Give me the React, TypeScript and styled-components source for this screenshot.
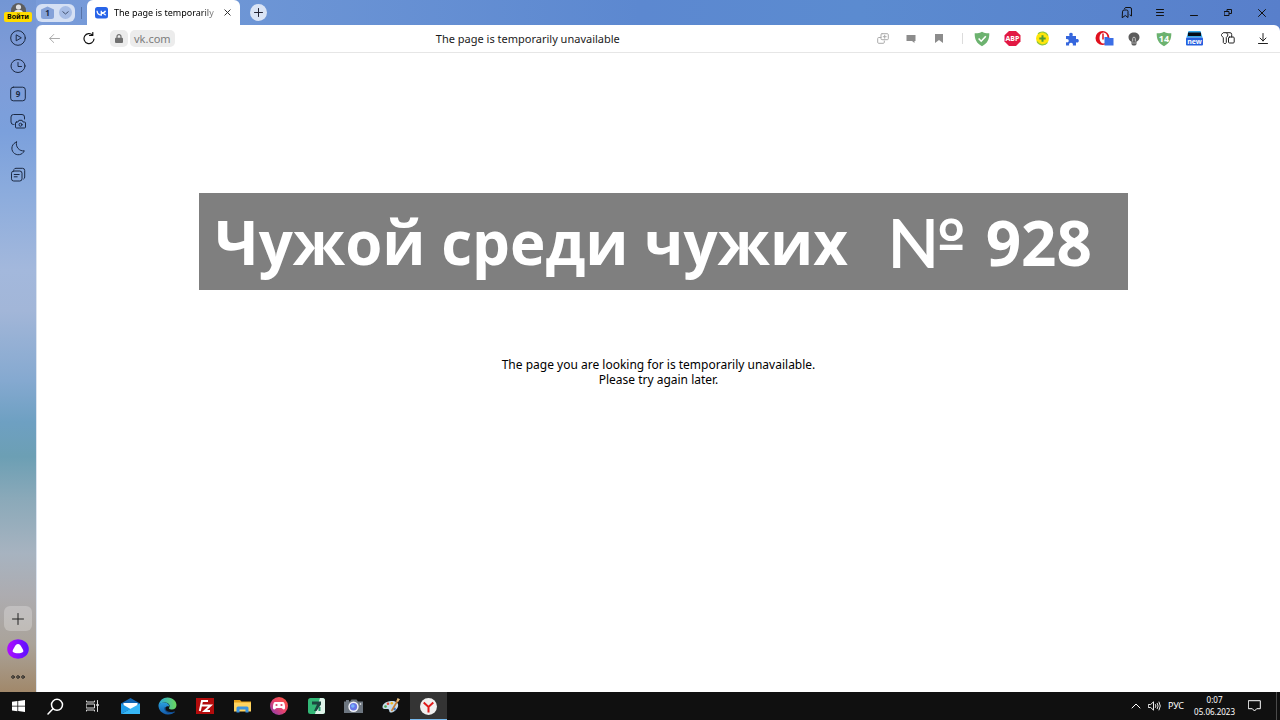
import React from "react";
import styled, { createGlobalStyle } from "styled-components";

const Global = createGlobalStyle`
  * { box-sizing: border-box; }
  body { margin: 0; background: #fff; font-family: "Noto Sans", "Open Sans", sans-serif; color: #000; }
  button { border: 0; padding: 0; background: none; font: inherit; color: inherit; cursor: pointer; }
  svg { display: block; flex: none; }
`;

const Screen = styled.div`
  display: flex;
  flex-direction: column;
  min-height: 100vh;
`;

const Browser = styled.div`
  flex: 1;
  display: flex;
  background: linear-gradient(90deg, #7c9dda 0, #6f97d6 200px, #5c88d0 640px, #5b8bd0 860px, #587fcb 1280px);
`;

const Sidebar = styled.nav`
  width: 36px;
  display: flex;
  flex-direction: column;
  background: linear-gradient(
    180deg,
    #7396d4 0%,
    #7f9cd8 9%,
    #7ba0dc 19%,
    #8cacdd 28%,
    #a3b8dc 39%,
    #a2b6d8 45%,
    #85a9d0 55%,
    #6ea0c2 61%,
    #6c9fb4 66%,
    #8aa9b9 72%,
    #a7b3c0 80%,
    #adacb0 86%,
    #aaa39a 93%,
    #a1886a 100%
  );
`;

const SideGroup = styled.div<{ $end?: boolean }>`
  display: flex;
  flex-direction: column;
  align-items: center;
  margin-top: ${(p) => (p.$end ? "auto" : "0")};
`;

const SideButton = styled.button<{ $height?: number }>`
  width: 36px;
  height: ${(p) => p.$height ?? 28}px;
  display: flex;
  align-items: center;
  justify-content: center;
`;

const Login = styled.button`
  display: flex;
  flex-direction: column;
  align-items: center;
  height: 24px;
  padding-top: 3px;
`;

const LoginLabel = styled.span`
  width: 28px;
  height: 10px;
  border-radius: 2px;
  background: #ffdc00;
  font-size: 7px;
  line-height: 10px;
  font-weight: 700;
  text-align: center;
`;

const AddPanel = styled.button`
  width: 28px;
  height: 25px;
  margin-bottom: 4px;
  border-radius: 6px;
  background: rgba(255, 255, 255, 0.25);
  display: flex;
  align-items: center;
  justify-content: center;
`;

const Main = styled.div`
  flex: 1;
  min-width: 0;
  display: flex;
  flex-direction: column;
`;

const TabStrip = styled.header`
  height: 25px;
  display: flex;
  align-items: center;
`;

const Workspace = styled.div`
  height: 18px;
  padding: 0 3px 0 5px;
  gap: 5px;
  border-radius: 6px;
  background: #d5e0f4;
  display: flex;
  align-items: center;
`;

const StripDivider = styled.span`
  width: 1px;
  height: 12px;
  margin: 0 5px 0 6px;
  background: #5673a8;
`;

const Tab = styled.div`
  align-self: stretch;
  width: 153px;
  padding: 0 9px 0 8px;
  border-radius: 6px 6px 0 0;
  background: #fff;
  display: flex;
  align-items: center;
  gap: 6px;
`;

const TabTitle = styled.span`
  flex: 1;
  white-space: nowrap;
  font-size: 9px;
  line-height: 14px;
  mask-image: linear-gradient(90deg, #000 85%, rgba(0, 0, 0, 0.2));
`;

const NewTab = styled.button`
  width: 17px;
  height: 17px;
  margin-left: 10px;
  border-radius: 50%;
  background: #dae4f5;
  display: flex;
  align-items: center;
  justify-content: center;
`;

const WindowControls = styled.div`
  display: flex;
  margin-left: auto;
  padding-right: 1px;
`;

const WindowButton = styled.button`
  width: 34px;
  height: 25px;
  display: flex;
  align-items: center;
  justify-content: center;
`;

const Viewport = styled.div`
  flex: 1;
  display: flex;
  flex-direction: column;
  border-left: 1px solid #dbe3ee;
  border-radius: 6px 6px 0 0;
  background: #fff;
`;

const Toolbar = styled.div`
  height: 28px;
  display: flex;
  align-items: center;
  border-bottom: 1px solid #e6e6e6;
`;

const ToolButton = styled.button<{ $width: number }>`
  width: ${(p) => p.$width}px;
  height: 27px;
  display: flex;
  align-items: center;
  justify-content: center;
`;

const Address = styled.div`
  display: flex;
  gap: 2px;
  margin-left: 4px;
`;

const Chip = styled.button<{ $pad: number }>`
  height: 17px;
  padding: 0 ${(p) => p.$pad}px;
  border-radius: 5px;
  background: #ececec;
  color: #7c7c7c;
  font-size: 11px;
  line-height: 17px;
  display: flex;
  align-items: center;
`;

const PageName = styled.div`
  flex: 1;
  padding-left: 12px;
  text-align: center;
  font-size: 11px;
  line-height: 16px;
  color: #1a1a1a;
`;

const ToolGroup = styled.div`
  display: flex;
  margin-right: 2px;
`;

const ToolDivider = styled.span`
  align-self: center;
  width: 1px;
  height: 11px;
  margin: 0 4px 0 9px;
  background: #dcdcdc;
`;

const Page = styled.main`
  flex: 1;
  display: flex;
  flex-direction: column;
  align-items: center;
  padding-top: 140px;
`;

const Banner = styled.h1`
  width: 75%;
  max-width: 929px;
  min-height: 97px;
  margin: 0 0 67px 10px;
  padding: 0 16px;
  background: #7f7f7f;
  color: #fff;
  display: flex;
  align-items: center;
  font-family: "Open Sans", sans-serif;
  font-size: 60px;
  line-height: 90px;
  white-space: nowrap;
`;

const NumberSign = styled.span`
  margin-left: auto;
  margin-right: 20px;
  font-family: Lato, sans-serif;
  font-size: 68px;
  font-weight: 600;
`;

const Score = styled.span`
  margin-right: 20px;
  font-size: 62px;
`;

const Message = styled.p`
  margin: 0;
  text-align: center;
  font-size: 12px;
  line-height: 15px;
`;

const Taskbar = styled.footer`
  height: 28px;
  display: flex;
  align-items: center;
  justify-content: space-between;
  background: #101010;
  color: #fff;
`;

const Apps = styled.div`
  width: 447px;
  height: 28px;
  display: grid;
  grid-template-columns: repeat(12, 1fr);
`;

const AppButton = styled.button<{ $active?: boolean }>`
  display: flex;
  align-items: center;
  justify-content: center;
  background: ${(p) => (p.$active ? "#343434" : "none")};
  box-shadow: ${(p) => (p.$active ? "inset 0 -1px #76b9ed" : "none")};
`;

const Tray = styled.div`
  display: flex;
  align-items: center;
  gap: 7px;
`;

const Lang = styled.button`
  font-size: 9px;
  line-height: 12px;
`;

const Clock = styled.time`
  text-align: center;
  font-size: 8px;
  line-height: 12px;
  margin: 0 6px 0 3px;
`;

const ShowDesktop = styled.button`
  width: 4px;
  height: 28px;
  margin-left: 8px;
  border-left: 1px solid #4a4a4a;
`;

type IconProps = {
  w?: number;
  h?: number;
  box?: string;
  stroke?: string;
  sw?: number;
  children: React.ReactNode;
};

const Line = ({ w = 16, h = w, box, stroke = "#1c2a44", sw = 1, children }: IconProps) => (
  <svg
    width={w}
    height={h}
    viewBox={box ?? `0 0 ${w} ${h}`}
    fill="none"
    stroke={stroke}
    strokeWidth={sw}
    strokeLinecap="round"
    strokeLinejoin="round"
    aria-hidden="true"
  >
    {children}
  </svg>
);

const Art = ({ w = 16, h = w, box, children }: IconProps) => (
  <svg width={w} height={h} viewBox={box ?? `0 0 ${w} ${h}`} aria-hidden="true">
    {children}
  </svg>
);

const glyphText = { fontFamily: "Open Sans", fontWeight: 700, textAnchor: "middle" as const, stroke: "none" };

const sideItems = [
  { label: "Видео", icon: <Line><circle cx="8" cy="8" r="7.3" /><path d="M6.2 5.2v5.6L11 8z" /></Line> },
  { label: "История", icon: <Line><ellipse cx="8" cy="8" rx="7" ry="6.5" /><path d="M8 4.5V8.5H11.5" /></Line> },
  {
    label: "Вкладки",
    icon: (
      <Line>
        <rect x="0.7" y="1.2" width="14.6" height="13.6" rx="2.6" />
        <text x="8" y="11.2" fontSize="8" fill="#1c2a44" {...glyphText}>9</text>
      </Line>
    ),
  },
  {
    label: "Скриншот",
    icon: (
      <Line>
        <path d="M4 11.500H3.500a2.500 2.500 0 0 1-2.500-2.500V4a2.500 2.500 0 0 1 2.500-2.500h8.500a2.500 2.500 0 0 1 2.500 2.500v2" />
        <path d="M6.500 9h1.400l1-1.700h3.200l1 1.700h1.400a1 1 0 0 1 1 1v4a1 1 0 0 1-1 1h-8a1 1 0 0 1-1-1v-4a1 1 0 0 1 1-1z" />
        <circle cx="10.500" cy="11.700" r="1.500" />
      </Line>
    ),
  },
  { label: "Тёмная тема", icon: <Line><path d="M6.500 2A6.500 6.500 0 1 0 14.300 10.800A7 7 0 0 1 6.500 2z" /></Line> },
  {
    label: "Лента",
    icon: (
      <Line>
        <rect x="1.500" y="4" width="10.500" height="10" rx="2.200" />
        <path d="M4 2.300a2 2 0 0 1 2-1h6.500a2.200 2.200 0 0 1 2.200 2.200v6.500a2 2 0 0 1-1 2M4.200 7.500h5M4.200 9.800h3" />
      </Line>
    ),
  },
];

const shield = "M8 .7C10 2 12.500 2.400 15.300 2.300C15.500 8 13.500 12.500 8 15.300C2.500 12.500.5 8 .7 2.300C3.500 2.400 6 2 8 .7z";

const extensionsA = [
  {
    label: "Protect",
    icon: <Art><path d={shield} fill="#6cb26f" /><path d="M4.600 7.500L7.200 10.200L11.800 5.200" fill="none" stroke="#fff" strokeWidth="1.600" /></Art>,
  },
  {
    label: "Adblock Plus",
    icon: (
      <Art w={17} h={15}>
        <path d="M5 0h7l4.500 4.300v6.200L12 15H5L.5 10.500V4.300z" fill="#e21843" />
        <text x="8.500" y="10" fontSize="7" fill="#fff" {...glyphText}>ABP</text>
      </Art>
    ),
  },
  {
    label: "Savings",
    icon: (
      <Art w={15}>
        <circle cx="7.500" cy="7.500" r="6.500" fill="#ffe60a" />
        <path d="M2 10.500A6.300 6.300 0 0 0 12.500 11.500M13 4.500A6.300 6.300 0 0 0 3 2.800" fill="none" stroke="#8fc63f" strokeWidth="1.200" />
        <path d="M7.500 4.300v6.400M4.300 7.500h6.400" stroke="#4f9a35" strokeWidth="2" />
      </Art>
    ),
  },
  {
    label: "Extensions",
    icon: <Art w={14}><path d="M1 4h3.500C3.700 2 4.500.8 6 .8S8.300 2 7.500 4H11v3.200c1.600-.7 2.800 0 2.800 1.500S12.600 11 11 10.300V13.500H7.800C8.300 11.800 7.500 10.800 6 10.800S3.700 11.800 4.200 13.500H1v-3.200c1.800.5 2.700-.3 2.700-1.500S2.800 6.700 1 7.200z" fill="#3566dd" /></Art>,
  },
];

const extensionsB = [
  {
    label: "VPN",
    icon: (
      <Art w={19} h={15}>
        <circle cx="7.500" cy="7" r="7" fill="#e0101d" />
        <ellipse cx="8.500" cy="7" rx="4" ry="5.600" fill="#fff" />
        <path d="M8 2.500v6" stroke="#e0101d" strokeWidth="1.500" />
        <path d="M9.500 6h3.500l1 1h4.500v7.500h-9z" fill="#3b6ee6" />
      </Art>
    ),
  },
  {
    label: "Lamp",
    icon: (
      <Art w={12} h={14}>
        <path d="M6 .5c3.200 0 5.500 1.900 5.500 4.700c0 2.200-1.300 3.600-3 4.500v2.500L7.300 13.500H4.700L3.500 12.200V9.700C1.800 8.800.5 7.400.5 5.200C.5 2.400 2.800.5 6 .5z" fill="#5c5c5c" />
        <path d="M4.700 9.500V6.500a1.300 1.300 0 0 1 2.600 0V9.500" fill="none" stroke="#c4c4c4" />
        <path d="M3.500 11h5" stroke="#aaa" />
      </Art>
    ),
  },
  {
    label: "Tracker blocker, 14",
    icon: (
      <Art>
        <path d={shield} fill="#6cb26f" />
        <text x="8" y="11" fontSize="9" fill="#fff" {...glyphText}>14</text>
      </Art>
    ),
  },
  {
    label: "News",
    icon: (
      <Art w={17} h={15}>
        <path d="M2.500 0h12l2 6.500H.5z" fill="#36a9ea" />
        <path d="M2 1.500h13v3.500h-13z" fill="#050c18" />
        <rect x="0" y="6.500" width="17" height="8" rx="1" fill="#2560df" />
        <text x="8.500" y="13" fontSize="7" fill="#fff" {...glyphText}>new</text>
      </Art>
    ),
  },
];

const apps = [
  {
    label: "Пуск",
    icon: <Art w={13} h={12}><path d="M0 1.700L5.400 1v4.700H0zM6.200.9L13 0v5.700H6.200zM0 6.500h5.400v4.700L0 10.400zM6.200 6.500H13V12l-6.800-.9z" fill="#fff" /></Art>,
  },
  { label: "Поиск", icon: <Line w={17} stroke="#fff" sw={1.5}><circle cx="10" cy="6.800" r="5.500" /><path d="M6 10.800L1 16" /></Line> },
  {
    label: "Представление задач",
    icon: <Line w={14} h={12} stroke="#dcdcdc"><path d="M.5 1v1h8V1M.5 11v-1h8v1M.5 4h8v4h-8zM11.500.5v11M11 4.500h1.500v1h-1.500z" /></Line>,
  },
  {
    label: "Почта",
    icon: (
      <Art w={19} h={16}>
        <path d="M0 5.500L9.500 0L19 5.500V10H0z" fill="#1266b3" />
        <path d="M2.500 5h14v6h-14z" fill="#fff" />
        <path d="M0 5.500L9.500 11L0 16z" fill="#1f9be8" />
        <path d="M19 5.500V16H0z" fill="#36b6f6" />
        <path d="M2.500 5h14L9.500 9.500z" fill="#fff" />
      </Art>
    ),
  },
  {
    label: "Edge",
    icon: (
      <Art w={19} h={18}>
        <defs>
          <linearGradient id="edgeTop" x1="0" x2="1"><stop offset="0" stopColor="#2aa7dd" /><stop offset="1" stopColor="#6bd85a" /></linearGradient>
          <linearGradient id="edgeLow" x1="0" y1="0" x2="0" y2="1"><stop offset="0" stopColor="#2aa0e0" /><stop offset="1" stopColor="#1259a8" /></linearGradient>
        </defs>
        <path d="M.5 8C1.500 3.500 5 .5 9.500.5C15 .5 18.500 4.500 18.500 8c0 3-2.200 4.500-4.700 4.500c-2.800 0-3.300-1.200-2.600-2C12.500 9 11 5.500 7 5.500C4 5.500 1.500 6.500.5 8z" fill="url(#edgeTop)" />
        <path d="M.5 8C2 5.800 4.500 5.300 6.500 5.500C10 5.800 11.500 8 11 9.500C9 8.500 6.500 10 7 12.500c.5 2.300 3.500 3.500 6 3.300c1.500-.1 2.800-.6 4-1.300C15.500 16.500 12.500 17.800 9.500 17.500C4 17 .2 13 .5 8z" fill="url(#edgeLow)" />
        <path d="M7 10.500c-.8 3.500 3 6.500 9.500 4.500" fill="none" stroke="#124c8f" strokeWidth="1.200" />
      </Art>
    ),
  },
  {
    label: "FileZilla",
    icon: (
      <Art w={18} h={16}>
        <rect width="18" height="16" fill="#b30c0c" />
        <path d="M3.800 13L6 3h6M5 7.500h4.500M9 7.500h5.500L8.500 13h5.500" fill="none" stroke="#fff" strokeWidth="2" />
      </Art>
    ),
  },
  {
    label: "Проводник",
    icon: (
      <Art w={17} h={14}>
        <path d="M0 1h6l1.500 1.500H17V5H0z" fill="#e6a21c" />
        <rect y="3.500" width="17" height="9" fill="#ffd460" />
        <path d="M2.500 13.500V9q0-1.500 1.500-1.500h9q1.500 0 1.500 1.500v4.500h-3V10.500h-6v3z" fill="#3b93e0" />
      </Art>
    ),
  },
  {
    label: "Игры",
    icon: (
      <Art w={18}>
        <defs><linearGradient id="game" x1="1" y1="0" x2="0" y2="1"><stop offset="0" stopColor="#ff5a3c" /><stop offset=".5" stopColor="#e8446c" /><stop offset="1" stopColor="#7d3bb8" /></linearGradient></defs>
        <circle cx="9" cy="9" r="9" fill="url(#game)" />
        <path d="M5 5h8q1.500 0 2 4q.4 3.500-1.300 3.500c-1 0-1.500-1.500-2.500-1.500H6.800c-1 0-1.500 1.500-2.500 1.500Q2.600 12.500 3 9q.5-4 2-4z" fill="#fff" />
        <circle cx="6.500" cy="8" r="1.100" fill="#dc4670" /><circle cx="11.500" cy="8" r="1.100" fill="#dc4670" />
      </Art>
    ),
  },
  {
    label: "Редактор",
    icon: (
      <Art w={17} h={16}>
        <rect width="17" height="16" rx="2.500" fill="#33b877" />
        <path d="M12 0h2.500A2.500 2.500 0 0 1 17 2.500v11a2.500 2.500 0 0 1-2.500 2.500H7z" fill="#dff3e9" />
        <path d="M4 3.500h9v3L8.500 13H6L9 6.500H4z" fill="#1c4740" />
        <path d="M11.500 9v4" stroke="#1f9d68" strokeWidth="2" />
      </Art>
    ),
  },
  {
    label: "Камера",
    icon: (
      <Art w={19} h={14}>
        <path d="M2 1h3v1.500h1L7.500.5h5L14 2.500h5V14H0V2.500h2z" fill="#6d7680" />
        <circle cx="9.500" cy="7.800" r="5.200" fill="#f3f4f8" />
        <circle cx="9.500" cy="7.800" r="3.700" fill="#6877e8" />
        <circle cx="8.800" cy="7" r="1.800" fill="#79b5fb" />
        <circle cx="16.500" cy="5" r=".8" fill="#fff" />
      </Art>
    ),
  },
  {
    label: "Paint",
    icon: (
      <Art w={18} h={16}>
        <path d="M9 3C14 2.500 17 5 16 8.500S11 15 8.500 14.500c-2-.5-.5-3-2.500-3.500S.5 12 .5 9S4 3.500 9 3z" fill="#c6dce9" />
        <circle cx="3.500" cy="8.500" r="1.300" fill="#49a34b" /><circle cx="6" cy="5.800" r="1.300" fill="#e14635" />
        <circle cx="9.800" cy="5.300" r="1.300" fill="#f2b51f" /><circle cx="12.500" cy="11" r="1.400" fill="#3572c8" />
        <path d="M16 2L9.500 13" stroke="#c57c31" strokeWidth="1.600" />
        <path d="M14.500 3L15.500 0L18 1.300L16 4z" fill="#e7bd7d" />
      </Art>
    ),
  },
  {
    label: "Яндекс Браузер",
    icon: (
      <Art w={17}>
        <circle cx="8.500" cy="8.500" r="8.500" fill="#f0f0f0" />
        <path d="M3.700 4.500L8.500 9L13.300 4.500M8.500 8.500V14.500" fill="none" stroke="#e01b1b" strokeWidth="2" />
      </Art>
    ),
  },
];

export default function App() {
  return (
    <Screen>
      <Global />
      <Browser>
        <Sidebar aria-label="Боковая панель">
          <SideGroup>
            <Login>
              <Art w={15} h={9}>
                <path d="M0 9V7.500a7.500 7.500 0 0 1 15 0V9z" fill="#5d5d5d" />
                <circle cx="7.500" cy="4" r="2.600" fill="#e2e2e2" />
                <path d="M3 9q1-2.300 4.500-2.300T12 9z" fill="#e2e2e2" />
              </Art>
              <LoginLabel>Войти</LoginLabel>
            </Login>
            {sideItems.map((item, i) => (
              <SideButton key={item.label} aria-label={item.label} $height={i < 2 ? 28 : 27}>{item.icon}</SideButton>
            ))}
          </SideGroup>
          <SideGroup $end>
            <AddPanel aria-label="Добавить">
              <Line w={12} stroke="#222"><path d="M6 .5v11M.5 6h11" /></Line>
            </AddPanel>
            <SideButton aria-label="Алиса" $height={27}>
              <Art w={22} h={20}>
                <defs><linearGradient id="alice" x1="0" x2="1"><stop offset="0" stopColor="#b00cff" /><stop offset="1" stopColor="#5a12ff" /></linearGradient></defs>
                <ellipse cx="11" cy="10" rx="10.800" ry="9.800" fill="url(#alice)" />
                <path d="M11 5c1.500 0 2.400 1.200 3.600 3.200S17 12 16 13s-3 1.200-5 1.200S7 14 6 13s.2-2.800 1.400-4.800S9.500 5 11 5z" fill="#fff" />
              </Art>
            </SideButton>
            <SideButton aria-label="Ещё" $height={30}>
              <Line w={16} h={4} stroke="#222"><circle cx="3" cy="2" r="1.300" /><circle cx="8" cy="2" r="1.300" /><circle cx="13" cy="2" r="1.300" /></Line>
            </SideButton>
          </SideGroup>
        </Sidebar>

        <Main>
          <TabStrip>
            <Workspace>
              <Art w={13} h={14}>
                <path d="M6.500.5L13 3.500v7q0 2.500-2.500 2.500h-8Q0 13 0 10.500v-7z" fill="#85a2d9" />
                <text x="6.500" y="10" fontSize="8" fill="#1c2a44" {...glyphText}>1</text>
              </Art>
              <Art w={13}>
                <circle cx="6.500" cy="6.500" r="6.500" fill="#a6bce5" />
                <path d="M3.500 5.500L6.500 8L9.500 5.500" fill="none" stroke="#44536f" />
              </Art>
            </Workspace>
            <StripDivider />
            <Tab>
              <Art w={13} h={12}>
                <rect width="13" height="11.500" rx="2.500" fill="#2864e8" />
                <path d="M2 3.800c.3 2.600 1.800 4.300 4.300 4.300V3.800M10.500 3.800C10 5.200 8.500 6 6.500 6C8.500 6 10 7 10.700 8.300" fill="none" stroke="#fff" strokeWidth="1.300" />
              </Art>
              <TabTitle>The page is temporarily</TabTitle>
              <button aria-label="Закрыть вкладку">
                <Line w={7} stroke="#333"><path d="M.8.8l5.400 5.400M6.200.8L.8 6.200" /></Line>
              </button>
            </Tab>
            <NewTab aria-label="Новая вкладка">
              <Line w={9} stroke="#223"><path d="M4.500.5v8M.5 4.500h8" /></Line>
            </NewTab>
            <WindowControls>
              <WindowButton aria-label="Коллекции">
                <Line w={11} stroke="#111"><path d="M1.500 4.500Q1.500 3 3 3h2.500Q7 3 7 4.500v6L4.300 8.500L1.500 10.500zM3.500 1.500Q4 .5 5 .5h4Q10.500.5 10.500 2v7L9 8" /></Line>
              </WindowButton>
              <WindowButton aria-label="Меню">
                <Line w={8} h={7} stroke="#111"><path d="M.5.5h7M.5 3.500h7M.5 6.500h7" /></Line>
              </WindowButton>
              <WindowButton aria-label="Свернуть">
                <Line w={8} h={7} stroke="#111"><path d="M.5 6.500h7" /></Line>
              </WindowButton>
              <WindowButton aria-label="Развернуть">
                <Line w={8} h={7} stroke="#111"><path d="M.5 2.500h4.500v4H.5zM3 2V.5h4.500v4H5.500" /></Line>
              </WindowButton>
              <WindowButton aria-label="Закрыть">
                <Line w={8} stroke="#111"><path d="M.5.5l7 7M7.500.5l-7 7" /></Line>
              </WindowButton>
            </WindowControls>
          </TabStrip>

          <Viewport>
            <Toolbar>
              <ToolButton $width={35} aria-label="Назад">
                <Line w={11} h={9} stroke="#aaa"><path d="M10.500 4.500H.7M4.700.5L.7 4.500l4 4" /></Line>
              </ToolButton>
              <ToolButton $width={34} aria-label="Обновить">
                <Line w={12} h={13} stroke="#111" sw={1.2}><path d="M9.500 3A5 5 0 1 0 11 7M6.500 3.500H9.800V.5" /></Line>
              </ToolButton>
              <Address>
                <Chip $pad={5} aria-label="Безопасность">
                  <Art w={8} h={9}>
                    <rect y="3.700" width="8" height="5.300" rx="1" fill="#707070" />
                    <path d="M2 4.500V2.700a2 2 0 0 1 4 0V4.500" fill="none" stroke="#707070" strokeWidth="1.200" />
                  </Art>
                </Chip>
                <Chip $pad={4}>vk.com</Chip>
              </Address>
              <PageName>The page is temporarily unavailable</PageName>
              <ToolButton $width={28} aria-label="Перевести">
                <Line w={12} h={11} stroke="#aaa"><path d="M4 4.500H1.700q-1 0-1 1v3.800q0 1 1 1h4.600q1 0 1-1V8M5 .7h5.300q1 0 1 1v4q0 1-1 1H5q-1 0-1-1v-4q0-1 1-1zM7.700 2.200v3M6.200 3.700h3" /></Line>
              </ToolButton>
              <ToolButton $width={28} aria-label="Отзыв">
                <Art w={10} h={8}><path d="M.5 0h9v6H8.500v2L6 6H.5z" fill="#8c8c8c" /></Art>
              </ToolButton>
              <ToolButton $width={28} aria-label="Закладка">
                <Art w={8} h={9}><path d="M0 0h8v9L4 6L0 9z" fill="#8c8c8c" /></Art>
              </ToolButton>
              <ToolDivider />
              <ToolGroup>
                {extensionsA.map((e) => <ToolButton key={e.label} $width={30} aria-label={e.label}>{e.icon}</ToolButton>)}
              </ToolGroup>
              <ToolGroup>
                {extensionsB.map((e) => <ToolButton key={e.label} $width={30} aria-label={e.label}>{e.icon}</ToolButton>)}
              </ToolGroup>
              <ToolButton $width={34} aria-label="Пароли">
                <Line w={14} h={13} stroke="#222"><path d="M.7 2.200L2.200.7H5.300L6.700 2.200V4L5.300 5.500V10.500L3.800 12L2.300 10.500V5.500L.7 4zM5.500.7H9Q10.700.7 10.700 2.500V5M8.500 5h3.700q1 0 1 1v4q0 1-1 1H8.500q-1 0-1-1v-4q0-1 1-1z" /></Line>
              </ToolButton>
              <ToolButton $width={35} aria-label="Загрузки">
                <Line w={10} h={11} stroke="#222"><path d="M5 .5v7.500M2 5l3 3l3-3M.5 10.500h9" /></Line>
              </ToolButton>
            </Toolbar>
            <Page>
              <Banner>
                <span>Чужой среди чужих</span>
                <NumberSign>№</NumberSign>
                <Score>928</Score>
              </Banner>
              <Message>
                The page you are looking for is temporarily unavailable.
                <br />
                Please try again later.
              </Message>
            </Page>
          </Viewport>
        </Main>
      </Browser>

      <Taskbar>
        <Apps>
          {apps.map((a, i) => (
            <AppButton key={a.label} aria-label={a.label} $active={i === apps.length - 1}>{a.icon}</AppButton>
          ))}
        </Apps>
        <Tray>
          <Line w={10} h={6} stroke="#fff"><path d="M1 5L5 1L9 5" /></Line>
          <Line w={13} h={10} stroke="#e8e8e8"><path d="M.7 3.500h2L5.500.8v8.400L2.700 6.500h-2zM7.500 3.500q1 1.500 0 3M9.300 2.300q1.800 2.700 0 5.400M11.100 1q2.600 4 0 8" /></Line>
          <Lang>РУС</Lang>
          <Clock>0:07<br />05.06.2023</Clock>
          <Line w={13} h={12} stroke="#fff"><path d="M.7.7h11.600v8H8.700L6.500 11L4.300 8.700H.7z" /></Line>
          <ShowDesktop aria-label="Показать рабочий стол" />
        </Tray>
      </Taskbar>
    </Screen>
  );
}
